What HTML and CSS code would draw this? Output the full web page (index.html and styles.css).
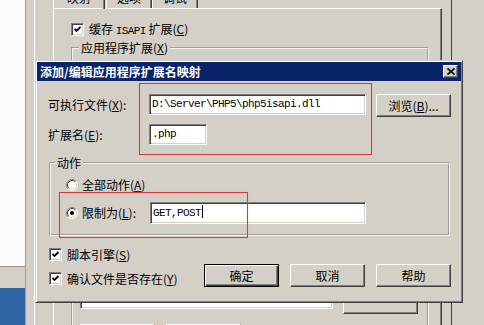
FILE: index.html
```html
<!DOCTYPE html>
<html lang="zh-CN">
  <head>
    <meta charset="UTF-8" />
    <meta name="viewport" content="width=device-width, initial-scale=1.0" />
    <title>添加/编辑应用程序扩展名映射</title>
    <link rel="stylesheet" href="styles.css">
  </head>
  <body>
    <div class="desk">
      <div class="strip"></div>

      <div class="sheet">
        <div class="tabs">
          <div class="tab sel"><span>映射</span></div>
          <div class="tab"><span>选项</span></div>
          <div class="tab"><span>调试</span></div>
        </div>
        <div class="page">
          <div class="check-row">
            <span class="chk">
              <svg width="7" height="7" viewBox="0 0 7 7"><polyline points="0.5,3 2.5,5 6.5,1" fill="none" stroke="#000" stroke-width="1.8"/></svg>
            </span>
            <span>缓存 <span class="lat">ISAPI</span> 扩展(<u>C</u>)</span>
          </div>
          <fieldset class="group">
            <legend>应用程序扩展(<u>X</u>)</legend>
            <div class="listbox"></div>
            <div class="list-tools">
              <div class="box"></div>
              <div class="btn ghost"></div>
            </div>
            <div class="list-buttons">
              <div class="btn ghost"></div>
              <div class="btn ghost"></div>
            </div>
          </fieldset>
        </div>
      </div>

      <div class="dialog">
        <div class="titlebar">
          <span>添加/编辑应用程序扩展名映射</span>
          <span class="close">
            <svg width="8" height="7" viewBox="0 0 8 7"><path d="M0.5 0.5 L7.5 6.5 M7.5 0.5 L0.5 6.5" stroke="#000" stroke-width="1.6"/></svg>
          </span>
        </div>

        <div class="content">
          <div class="row exe">
            <label>可执行文件(<u>X</u>):</label>
            <div class="field">D:\Server\PHP5\php5isapi.dll</div>
            <div class="btn">浏览(<u>B</u>)...</div>
          </div>
          <div class="row ext">
            <label>扩展名(<u>E</u>):</label>
            <div class="field">.php</div>
          </div>

          <fieldset class="actions">
            <legend>动作</legend>
            <div class="radio-row">
              <svg class="radio" width="12" height="12" viewBox="0 0 12 12">
                <circle cx="6" cy="6" r="5" fill="#fff"/>
                <path d="M9.89 2.11 A5.5 5.5 0 0 0 2.11 9.89" fill="none" stroke="#808080"/>
                <path d="M2.11 9.89 A5.5 5.5 0 0 0 9.89 2.11" fill="none" stroke="#fff"/>
                <path d="M9.18 2.82 A4.5 4.5 0 0 0 2.82 9.18" fill="none" stroke="#404040"/>
                <path d="M2.82 9.18 A4.5 4.5 0 0 0 9.18 2.82" fill="none" stroke="#d4d0c8"/>
              </svg>
              <span>全部动作(<u>A</u>)</span>
            </div>
            <div class="radio-row limit">
              <svg class="radio" width="12" height="12" viewBox="0 0 12 12">
                <circle cx="6" cy="6" r="5" fill="#fff"/>
                <path d="M9.89 2.11 A5.5 5.5 0 0 0 2.11 9.89" fill="none" stroke="#808080"/>
                <path d="M2.11 9.89 A5.5 5.5 0 0 0 9.89 2.11" fill="none" stroke="#fff"/>
                <path d="M9.18 2.82 A4.5 4.5 0 0 0 2.82 9.18" fill="none" stroke="#404040"/>
                <path d="M2.82 9.18 A4.5 4.5 0 0 0 9.18 2.82" fill="none" stroke="#d4d0c8"/>
                <circle cx="6" cy="6" r="2" fill="#000"/>
              </svg>
              <span class="limit-label">限制为(<u>L</u>):</span>
              <div class="field">GET,POST<span class="caret"></span></div>
            </div>
          </fieldset>

          <div class="bottom">
            <div class="checks">
              <div class="check-row">
                <span class="chk">
                  <svg width="7" height="7" viewBox="0 0 7 7"><polyline points="0.5,3 2.5,5 6.5,1" fill="none" stroke="#000" stroke-width="1.8"/></svg>
                </span>
                <span>脚本引擎(<u>S</u>)</span>
              </div>
              <div class="check-row">
                <span class="chk">
                  <svg width="7" height="7" viewBox="0 0 7 7"><polyline points="0.5,3 2.5,5 6.5,1" fill="none" stroke="#000" stroke-width="1.8"/></svg>
                </span>
                <span>确认文件是否存在(<u>Y</u>)</span>
              </div>
            </div>
            <div class="buttons">
              <div class="btn default">确定</div>
              <div class="btn">取消</div>
              <div class="btn">帮助</div>
            </div>
          </div>
        </div>

        <div class="mark mark-file"></div>
        <div class="mark mark-limit"></div>
      </div>
    </div>
  </body>
</html>
```

FILE: styles.css
```css
body {
  margin: 0;
  font-family: "Noto Sans CJK SC", sans-serif;
  font-size: 12px;
  color: #000000;
}

u {
  text-decoration: underline;
}

.desk {
  position: relative;
  width: 484px;
  height: 325px;
  overflow: hidden;
  background-color: #d4d0c8;
}

/* left edge of the window behind */
.strip {
  position: absolute;
  left: 0;
  top: 0;
  width: 25px;
  height: 325px;
  border-right: 1px solid #a09c94;
  background: linear-gradient(
    #fbfbfb 0,
    #fbfbfb 266px,
    #9a968e 266px,
    #9a968e 267px,
    #d4d0c8 267px,
    #d4d0c8 288px,
    #3166a6 288px
  );
}

.sheet {
  position: absolute;
  left: 34px;
  top: 0;
  width: 416px;
  height: 325px;
  border-left: 1px solid #ffffff;
  border-right: 1px solid #404040;
}

.tabs {
  display: flex;
  height: 8px;
  margin-left: 18px;
}

.tab {
  width: 46px;
  height: 8px;
  overflow: hidden;
  box-sizing: border-box;
  border-left: 1px solid #ffffff;
  border-right: 1px solid #404040;
  box-shadow: inset -1px 0 #808080;
  text-align: center;
}

.tab.sel {
  width: 52px;
  height: 9px;
  margin-right: 1px;
}

.tab span {
  display: block;
  margin-top: -9px;
  line-height: 14px;
}

.page {
  margin-left: 18px;
  width: 389px;
  height: 317px;
  box-sizing: border-box;
  border-top: 1px solid #ffffff;
  border-left: 1px solid #ffffff;
  border-right: 1px solid #404040;
  box-shadow: inset -1px 0 #808080;
  padding: 14px 0 0 17px;
}

.check-row {
  display: flex;
  align-items: center;
  gap: 5px;
  height: 13px;
  line-height: 13px;
  white-space: nowrap;
}

.chk {
  display: flex;
  align-items: center;
  justify-content: center;
  width: 13px;
  height: 13px;
  box-sizing: border-box;
  border: 1px solid;
  border-color: #808080 #ffffff #ffffff #808080;
  box-shadow: inset 1px 1px #404040, inset -1px -1px #d4d0c8;
  background-color: #ffffff;
}

.lat,
.field {
  font-family: "Liberation Mono", monospace;
  font-size: 11px;
  letter-spacing: -0.6px;
}

fieldset {
  margin: 0;
  border: 2px groove #f4f2ee;
}

legend {
  padding: 0 2px;
  line-height: 14px;
}

.group {
  width: 358px;
  box-sizing: border-box;
  margin-top: 5px;
  padding: 5px 0 0 7px;
}

.group legend {
  margin-left: -1px;
}

.listbox {
  width: 336px;
  height: 230px;
  border-top: 1px solid #808080;
}

.list-tools {
  display: flex;
  align-items: flex-start;
  gap: 10px;
}

.list-tools .box {
  width: 253px;
  height: 18px;
  box-sizing: border-box;
  border: 1px solid;
  border-color: #808080 #ffffff #ffffff #808080;
  box-shadow: inset 1px 1px #404040, inset -1px -1px #d4d0c8;
  background-color: #ffffff;
}

.list-buttons {
  display: flex;
  gap: 11px;
  margin-top: 10px;
}

.dialog {
  position: absolute;
  left: 35px;
  top: 60px;
  width: 428px;
  height: 243px;
  box-sizing: border-box;
  border: 1px solid;
  border-color: #d4d0c8 #404040 #404040 #d4d0c8;
  box-shadow: inset 1px 1px #ffffff, inset -1px -1px #808080;
  padding: 1px;
  background-color: #d4d0c8;
}

.titlebar {
  display: flex;
  align-items: center;
  justify-content: space-between;
  height: 19px;
  padding: 0 3px;
  background-color: #0a246a;
  color: #ffffff;
  font-weight: bold;
  line-height: 19px;
}

.close {
  display: flex;
  align-items: center;
  justify-content: center;
  width: 15px;
  height: 13px;
  box-sizing: border-box;
  border: 1px solid;
  border-color: #ffffff #404040 #404040 #ffffff;
  box-shadow: inset -1px -1px #808080;
  background-color: #d4d0c8;
}

.content {
  padding: 13px 10px 0 11px;
}

.row {
  display: grid;
  align-items: start;
}

.row label {
  line-height: 21px;
}

.exe {
  grid-template-columns: 101px 217px 75px;
}

.exe .btn {
  margin-left: 10px;
}

.ext {
  grid-template-columns: 101px 58px;
  margin-top: 7px;
}

.field {
  height: 21px;
  box-sizing: border-box;
  border: 1px solid;
  border-color: #808080 #ffffff #ffffff #808080;
  box-shadow: inset 1px 1px #404040, inset -1px -1px #d4d0c8;
  background-color: #ffffff;
  padding-left: 2px;
  line-height: 19px;
  white-space: nowrap;
  overflow: hidden;
}

.caret {
  display: inline-block;
  width: 1px;
  height: 13px;
  margin-left: 1px;
  vertical-align: -2px;
  background-color: #000000;
}

.btn {
  width: 75px;
  height: 23px;
  box-sizing: border-box;
  border: 1px solid;
  border-color: #ffffff #404040 #404040 #ffffff;
  box-shadow: inset -1px -1px #808080;
  background-color: #d4d0c8;
  text-align: center;
  line-height: 21px;
}

.btn.default {
  border-color: #000000;
  box-shadow: inset 1px 1px #ffffff, inset -1px -1px #404040,
    inset -2px -2px #808080;
}

.actions {
  width: 401px;
  box-sizing: border-box;
  margin: 11px 0 0 1px;
  padding: 8px 10px 10px 15px;
}

.actions legend {
  margin-left: -11px;
}

.radio-row {
  display: flex;
  align-items: center;
  gap: 4px;
  height: 14px;
  line-height: 14px;
}

.radio-row.limit {
  height: 22px;
  margin-top: 10px;
}

.limit-label {
  width: 64px;
}

.limit .field {
  width: 216px;
  height: 22px;
  line-height: 20px;
}

.bottom {
  display: flex;
  justify-content: space-between;
  margin-top: 12px;
}

.checks {
  display: flex;
  flex-direction: column;
  gap: 11px;
  margin-left: 1px;
}

.buttons {
  display: flex;
  gap: 11px;
  margin-top: 16px;
}

/* red highlight boxes drawn over the dialog */
.mark {
  position: absolute;
  border: 1px solid #d03c3c;
  box-shadow: 0 0 1px #f3a3a3, inset 0 0 1px #f3a3a3;
}

.mark-file {
  left: 103px;
  top: 22px;
  width: 231px;
  height: 70px;
}

.mark-limit {
  left: 23px;
  top: 131px;
  width: 187px;
  height: 44px;
}
```
